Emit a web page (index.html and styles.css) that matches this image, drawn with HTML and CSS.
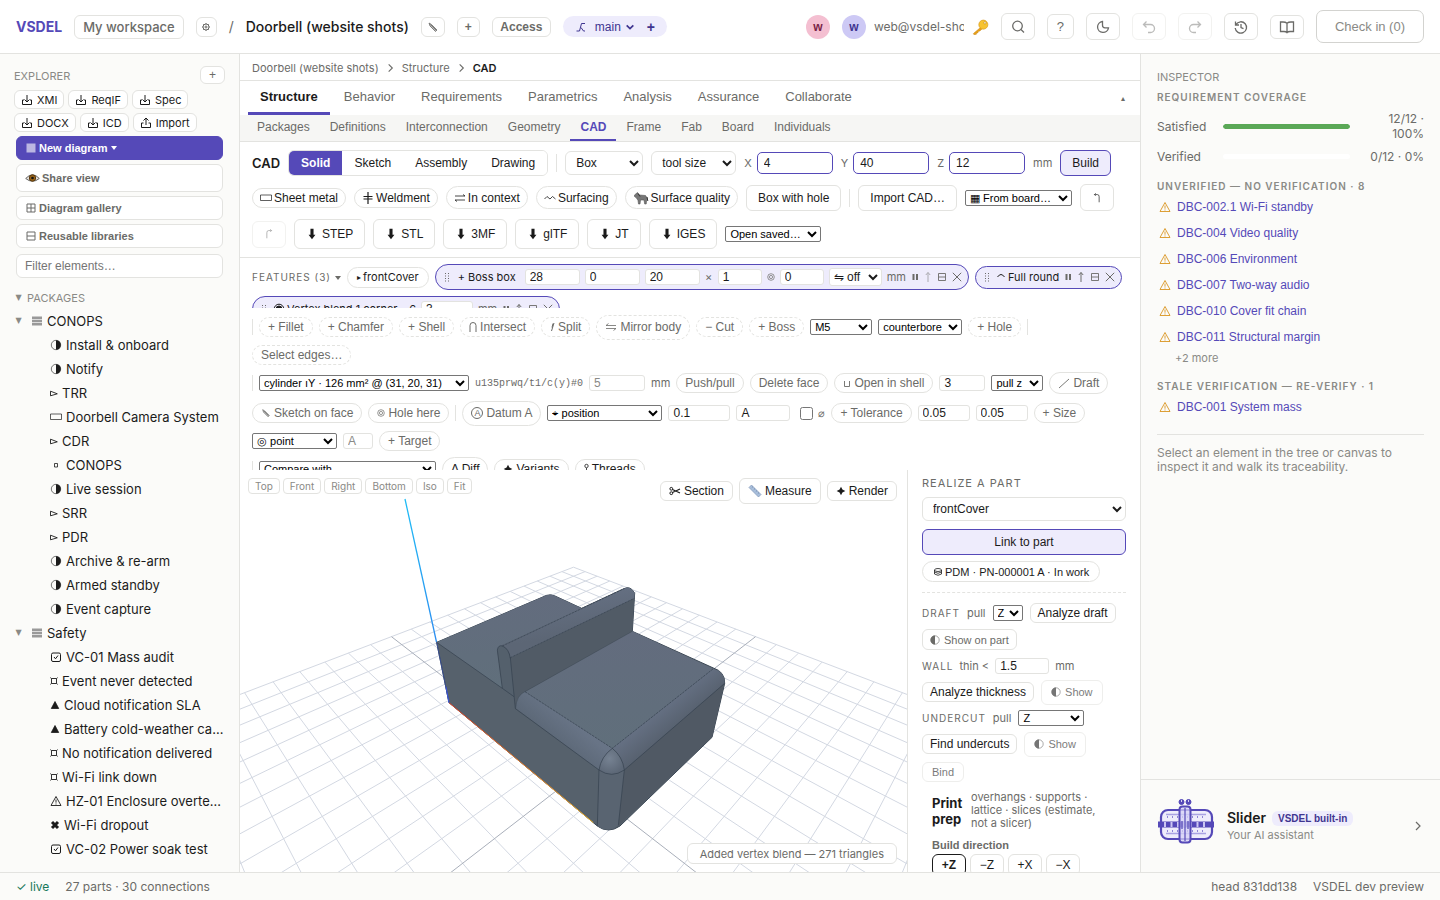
FILE: index.html
```html
<!DOCTYPE html>
<html lang="en">
<head>
<meta charset="utf-8">
<title>VSDEL – Doorbell (website shots)</title>
<meta name="viewport" content="width=device-width, initial-scale=1">
<link rel="stylesheet" href="styles.css">
</head>
<body>
<svg class="sprite" aria-hidden="true">
  <symbol id="download" viewBox="0 0 12 12"><path d="M6 1v7M3.500 5.500 6 8l2.500-2.500M3 6H1.500v4.500h9V6H9"/></symbol>
  <symbol id="upload" viewBox="0 0 12 12"><path d="M6 8V1M3.500 3.500 6 1l2.500 2.500M3.500 6h-2v4.500h9V6h-2"/></symbol>
  <symbol id="pencil" viewBox="0 0 12 12"><path d="M2 2l1 3 5.500 5.500 1.500-1.500L4.500 3.500zM3.500 3.500l5.500 5.500" stroke-width=".8" fill="#bbb"/></symbol>
  <symbol id="gear" viewBox="0 0 12 12"><circle cx="6" cy="6" r="3"/><circle cx="6" cy="6" r="1"/><path d="M6 2v1M6 9v1M2 6h1M9 6h1M3.200 3.200l.7.7M8.100 8.100l.7.7M8.800 3.200l-.7.7M3.900 8.100l-.7.7"/></symbol>
  <symbol id="half" viewBox="0 0 12 12"><circle cx="6" cy="6" r="4.700" stroke-width=".6"/><path d="M6 1.200a4.800 4.800 0 0 1 0 9.600z" fill="currentColor" stroke="none"/></symbol>
  <symbol id="halfleft" viewBox="0 0 10 12"><circle cx="5" cy="6" r="4.200" stroke-width=".6"/><path d="M5 1.500a4.500 4.500 0 0 0 0 9z" fill="currentColor" stroke="none"/></symbol>
  <symbol id="flag" viewBox="0 0 8 12"><path d="M.5 4.200l6.800 2.600-6.800 2z" stroke-width=".9"/></symbol>
  <symbol id="rect" viewBox="0 0 12 12"><path d="M.5 3h11v5.500H.5z" stroke-width=".7"/></symbol>
  <symbol id="dotbox" viewBox="0 0 12 12"><path d="M4.500 4.500h3v3.500h-3z" stroke-width=".8"/></symbol>
  <symbol id="pkg" viewBox="0 0 12 12"><path d="M1 1.500h10v9H1z" fill="#999" stroke="none"/><path d="M1 4.500h10M1 7.500h10" stroke="#eee" stroke-width=".8"/></symbol>
  <symbol id="solid" viewBox="0 0 12 12"><path d="M1.500 1.500h9v9h-9z" fill="currentColor" stroke="none"/></symbol>
  <symbol id="check" viewBox="0 0 12 12"><rect x="1.500" y="2" width="9" height="8.500" rx="1.500"/><path d="M4 6l1.500 1.800L8 4.500"/></symbol>
  <symbol id="square" viewBox="0 0 8 12"><path d="M1.500 3.500h5v5h-5zM.3 2.600l1.200.9M7.700 2.600l-1.200.9M.3 9.400l1.200-.9M7.700 9.400l-1.200-.9" stroke-width=".9"/></symbol>
  <symbol id="tri" viewBox="0 0 10 12"><path d="M5 2.500l3.700 7H1.300z" fill="currentColor" stroke="currentColor" stroke-width=".8"/></symbol>
  <symbol id="warn" viewBox="0 0 12 12"><path d="M6 1.500l5 9H1zM6 4.500v3.200M6 8.500v1" stroke-width=".9"/></symbol>
  <symbol id="cross" viewBox="0 0 10 12"><path d="M2 3l6 6M8 3L2 9" stroke-width="3"/></symbol>
  <symbol id="grid" viewBox="0 0 12 12"><path d="M2 2h8v8H2zM6 2v8M2 6h8"/></symbol>
  <symbol id="minusbox" viewBox="0 0 12 12"><path d="M2 2h8v8H2zM2 6h8"/></symbol>
  <symbol id="eye" viewBox="0 0 15 12"><path d="M.7 6.500Q7.500-1 14.300 6.500 7.500 12 .7 6.500z" fill="#e8e4e0" stroke="#666" stroke-width="1"/><circle cx="7.500" cy="6" r="3.200" fill="#9a6518" stroke="#5a3a10"/><circle cx="7.500" cy="6" r="1.300" fill="#111" stroke="none"/></symbol>
  <symbol id="branch" viewBox="0 0 12 12"><path d="M1.500 10h3l2-7.500h3.500M6 6.500L8.500 10H10"/></symbol>
  <symbol id="chev" viewBox="0 0 12 12"><path d="M2 4l4 4 4-4" stroke-width="2"/></symbol>
  <symbol id="next" viewBox="0 0 12 12"><path d="M4 2l4 4-4 4" stroke-width="1.200"/></symbol>
  <symbol id="key" viewBox="0 0 18 18"><path d="M9 9.500l-7.500 6.500.5 1 2.500-.2.300-1.500 1.500-.2.300-1.500 1.700-.4 2.200-2z" fill="#e9a21a" stroke="#c98512" stroke-width=".6"/><circle cx="12" cy="6.500" r="4.800" fill="#f7c331" stroke="#d7981a" stroke-width=".7"/><circle cx="13.700" cy="4.600" r="1.200" fill="#fff" stroke="#b98010" stroke-width=".6"/></symbol>
  <symbol id="search" viewBox="0 0 16 16"><circle cx="7.500" cy="7" r="4.800"/><path d="M11 10.500l3 3"/></symbol>
  <symbol id="moon" viewBox="0 0 16 16"><path d="M7.500 2.500a5.500 5.500 0 1 0 6 6.300H10a2.500 2.500 0 0 1-2.500-2.500z"/></symbol>
  <symbol id="undo" viewBox="0 0 16 16"><path d="M5.500 2.500l-3 3 3 3M2.500 5.500h7a4 4 0 0 1 0 8H7"/></symbol>
  <symbol id="redo" viewBox="0 0 16 16"><path d="M10.500 2.500l3 3-3 3M13.500 5.500h-7a4 4 0 0 0 0 8H9"/></symbol>
  <symbol id="history" viewBox="0 0 16 16"><path d="M3 5.500a5.700 5.700 0 1 1-.8 3.500M2.500 2.500v3.500H6M8 5v3.500l2.500 1.200"/></symbol>
  <symbol id="book" viewBox="0 0 16 16"><path d="M8 4.200Q6.500 3 4 3H1.500v9.500H5q2 0 3 1.200 1-1.200 3-1.200h3.500V3H12Q9.500 3 8 4.200zv9.500"/></symbol>
  <symbol id="weld" viewBox="0 0 12 12"><path d="M6 0v12M1.500 4.500h9M1.500 7h9" stroke-width="1.200"/></symbol>
  <symbol id="swap" viewBox="0 0 12 12"><path d="M1 4h10L9 2.500M11 8H1l2 1.500" stroke-width=".8"/></symbol>
  <symbol id="mirror" viewBox="0 0 12 12"><path d="M11 4.500H1l2.500-2M1 7.500h10l-2.500 2" stroke-width=".8"/></symbol>
  <symbol id="wave" viewBox="0 0 12 12"><path d="M.5 7L3 4.500 6 7l2.500-2.500L11.500 7" stroke-width=".8"/></symbol>
  <symbol id="horse" viewBox="0 0 16 14"><path d="M1.500 4l3-2.500 2 2.500 6 .5 2 3-.8 1-.5 4.500h-1.500L11 9H7.500L7 13H5.500L5 9.500 3.500 7 1.500 5.500z" fill="#777" stroke="#555" stroke-width=".6"/><path d="M5 2.500l2 3M14 6l.8 4" stroke="#333"/></symbol>
  <symbol id="arrowdown" viewBox="0 0 12 14"><path d="M4.200 1h3.600v7h2.200L6 13 2 8h2.200z" fill="currentColor" stroke="none"/></symbol>
  <symbol id="turnleft" viewBox="0 0 12 14"><path d="M8.500 12V5.500q0-2.500-2-2.500H3M4.500 1.500L3 3l1.500 1.500" stroke-width=".8"/></symbol>
  <symbol id="turnright" viewBox="0 0 12 14"><path d="M3.500 12V5.500q0-2.500 2-2.500H9M7.500 1.500L9 3 7.500 4.500" stroke-width=".8"/></symbol>
  <symbol id="grip" viewBox="0 0 8 12"><path d="M2 2.500h1M5 2.500h1M2 5h1M5 5h1M2 7.500h1M5 7.500h1M2 10h1M5 10h1"/></symbol>
  <symbol id="pause" viewBox="0 0 8 12"><path d="M2.500 3v6M6 3v6" stroke-width="2"/></symbol>
  <symbol id="up" viewBox="0 0 8 12"><path d="M4 11V1.500M1.800 4L4 1.500 6.200 4"/></symbol>
  <symbol id="x" viewBox="0 0 10 12"><path d="M.8 1.800l8.400 8.400M9.200 1.800L.8 10.200"/></symbol>
  <symbol id="bar2" viewBox="0 0 10 12"><path d="M1.500 2.500h7v7h-7zM1.500 6h7" stroke-width=".9"/></symbol>
  <symbol id="ring" viewBox="0 0 8 12"><circle cx="4" cy="6" r="3.300" stroke-width=".7"/><circle cx="4" cy="6" r="1.600" stroke-width=".7"/></symbol>
  <symbol id="arc" viewBox="0 0 10 12"><path d="M1.500 6q3.500-5 7 0"/></symbol>
  <symbol id="target" viewBox="0 0 12 12"><circle cx="6" cy="6" r="4.800"/><circle cx="6" cy="6" r="3" fill="currentColor"/></symbol>
  <symbol id="cap" viewBox="0 0 8 12"><path d="M1 11V4.500a3 3 0 0 1 6 0V11"/></symbol>
  <symbol id="slash" viewBox="0 0 5 12"><path d="M4 2L1.500 10M3 2.500l-1 4"/></symbol>
  <symbol id="cup" viewBox="0 0 8 12"><path d="M1.500 4v5.500h5V4" stroke-width=".9"/></symbol>
  <symbol id="diag" viewBox="0 0 12 12"><path d="M1 11L11 2" stroke-width=".9"/></symbol>
  <symbol id="star" viewBox="0 0 12 12"><path d="M6 .8L7.700 4.300 11.200 6 7.700 7.700 6 11.200 4.300 7.700.8 6l3.500-1.700z" fill="currentColor" stroke="none"/></symbol>
  <symbol id="scissors" viewBox="0 0 12 12"><circle cx="2.300" cy="3.800" r="1.400"/><circle cx="2.300" cy="8.200" r="1.400"/><path d="M3.500 4.500L11 8M3.500 7.500L11 4" stroke-width="1.200"/></symbol>
  <symbol id="ruler" viewBox="0 0 14 14"><path d="M1 3.500L3.500 1 13 10.500 10.500 13z" fill="#a9bfdc" stroke="#8097b8" stroke-width=".7"/><path d="M5 2.500L3.800 3.700M7 4.500L5.800 5.700M9 6.500L7.800 7.700M11 8.500L9.800 9.700" stroke="#5c7396" stroke-width=".6"/></symbol>
  <symbol id="disc" viewBox="0 0 10 12"><ellipse cx="5" cy="4" rx="3.500" ry="1.500" stroke-width=".8"/><path d="M1.500 4v4q3.500 2.600 7 0V4M1.500 6q3.500 2.600 7 0" stroke-width=".8"/></symbol>
  <symbol id="thread" viewBox="0 0 5 12"><circle cx="2.500" cy="3" r="1.700" stroke-width=".8"/><path d="M2.500 5v6" stroke-width=".8"/></symbol>
</svg>
<div class="app">
  <header class="topbar">
    <span class="brand">VSDEL</span>
    <button class="hbtn workspace">My workspace</button>
    <button class="hbtn small gear" aria-label="Settings"><svg class="i"><use href="#gear"/></svg></button>
    <span class="sep">/</span>
    <h1 class="project">Doorbell (website shots)</h1>
    <button class="hbtn small" aria-label="Rename"><svg class="i"><use href="#pencil"/></svg></button>
    <button class="hbtn small strong">+</button>
    <button class="hbtn small strong access">Access</button>
    <div class="branch"><svg class="i"><use href="#branch"/></svg><button class="plain">main <svg class="i i10"><use href="#chev"/></svg></button><button class="plain plus">+</button></div>
    <div class="topright">
      <span class="avatar pink">w</span>
      <div class="user"><span class="avatar violet">w</span><span class="email">web@vsdel-shots</span></div>
      <svg class="i keyicon"><use href="#key"/></svg>
      <button class="hbtn tool" aria-label="Search"><svg class="i i16"><use href="#search"/></svg></button>
      <button class="hbtn help">?</button>
      <button class="hbtn tool" aria-label="Theme"><svg class="i i16"><use href="#moon"/></svg></button>
      <button class="hbtn tool" disabled aria-label="Undo"><svg class="i i16"><use href="#undo"/></svg></button>
      <button class="hbtn tool" disabled aria-label="Redo"><svg class="i i16"><use href="#redo"/></svg></button>
      <button class="hbtn tool" aria-label="History"><svg class="i i16"><use href="#history"/></svg></button>
      <button class="hbtn tool docs" aria-label="Docs"><svg class="i i16"><use href="#book"/></svg></button>
      <button class="hbtn checkin">Check in (0)</button>
    </div>
  </header>
  <div class="body">
    <aside class="explorer">
      <div class="exhead"><span class="label">EXPLORER</span><button class="hbtn add">+</button></div>
      <div class="chips">
        <button class="exchip"><svg class="i"><use href="#download"/></svg>XMI</button><button class="exchip"><svg class="i"><use href="#download"/></svg>ReqIF</button><button class="exchip"><svg class="i"><use href="#download"/></svg>Spec</button>
      </div>
      <div class="chips">
        <button class="exchip"><svg class="i"><use href="#download"/></svg>DOCX</button><button class="exchip"><svg class="i"><use href="#download"/></svg>ICD</button><button class="exchip"><svg class="i"><use href="#upload"/></svg>Import</button>
      </div>
      <div class="exbtns">
        <button class="wide primary"><svg class="i faded"><use href="#solid"/></svg>New diagram <span class="caret"></span></button>
        <button class="wide share"><svg class="i eyeicon"><use href="#eye"/></svg>Share view</button>
        <button class="wide"><svg class="i"><use href="#grid"/></svg>Diagram gallery</button>
        <button class="wide"><svg class="i"><use href="#minusbox"/></svg>Reusable libraries</button>
        <input class="filter" type="text" placeholder="Filter elements…" aria-label="Filter elements">
      </div>
      <div class="packages"><span class="twist">▼</span>PACKAGES</div>
      <ul class="tree">
        <li class="top"><span class="twist">▼</span><svg class="i"><use href="#pkg"/></svg>CONOPS</li>
        <li><svg class="i"><use href="#half"/></svg>Install &amp; onboard</li>
        <li><svg class="i"><use href="#half"/></svg>Notify</li>
        <li><svg class="i n8"><use href="#flag"/></svg>TRR</li>
        <li><svg class="i"><use href="#rect"/></svg>Doorbell Camera System</li>
        <li><svg class="i n8"><use href="#flag"/></svg>CDR</li>
        <li><svg class="i"><use href="#dotbox"/></svg>CONOPS</li>
        <li><svg class="i"><use href="#half"/></svg>Live session</li>
        <li><svg class="i n8"><use href="#flag"/></svg>SRR</li>
        <li><svg class="i n8"><use href="#flag"/></svg>PDR</li>
        <li><svg class="i"><use href="#half"/></svg>Archive &amp; re-arm</li>
        <li><svg class="i"><use href="#half"/></svg>Armed standby</li>
        <li><svg class="i"><use href="#half"/></svg>Event capture</li>
        <li class="top"><span class="twist">▼</span><svg class="i"><use href="#pkg"/></svg>Safety</li>
        <li><svg class="i"><use href="#check"/></svg>VC-01 Mass audit</li>
        <li><svg class="i n8"><use href="#square"/></svg>Event never detected</li>
        <li><svg class="i n10"><use href="#tri"/></svg>Cloud notification SLA</li>
        <li><svg class="i n10"><use href="#tri"/></svg>Battery cold-weather ca…</li>
        <li><svg class="i n8"><use href="#square"/></svg>No notification delivered</li>
        <li><svg class="i n8"><use href="#square"/></svg>Wi-Fi link down</li>
        <li><svg class="i"><use href="#warn"/></svg>HZ-01 Enclosure overte…</li>
        <li><svg class="i n10"><use href="#cross"/></svg>Wi-Fi dropout</li>
        <li><svg class="i"><use href="#check"/></svg>VC-02 Power soak test</li>
      </ul>
    </aside>

    <main class="center">
      <nav class="crumbs"><span>Doorbell (website shots)</span><svg class="i"><use href="#next"/></svg><span>Structure</span><svg class="i"><use href="#next"/></svg><b>CAD</b></nav>
      <nav class="tabs">
        <button class="tab on">Structure</button><button class="tab">Behavior</button><button class="tab">Requirements</button><button class="tab">Parametrics</button><button class="tab">Analysis</button><button class="tab">Assurance</button><button class="tab">Collaborate</button>
        <button class="plain collapse">▴</button>
      </nav>
      <nav class="subtabs">
        <button class="sub">Packages</button><button class="sub">Definitions</button><button class="sub">Interconnection</button><button class="sub">Geometry</button><button class="sub on">CAD</button><button class="sub">Frame</button><button class="sub">Fab</button><button class="sub">Board</button><button class="sub">Individuals</button>
      </nav>
      <section class="toolbar">
        <div class="row">
          <b class="cad">CAD</b>
          <div class="seg"><button class="on">Solid</button><button>Sketch</button><button>Assembly</button><button>Drawing</button></div>
          <span class="vr"></span>
          <select class="sel box" aria-label="Primitive"><option>Box</option></select>
          <select class="sel size" aria-label="Size mode"><option>tool size</option></select>
          <label class="dim">X<input type="text" value="4"></label>
          <label class="dim">Y<input type="text" value="40"></label>
          <label class="dim">Z<input type="text" value="12"></label>
          <span class="unit">mm</span>
          <button class="btn accent">Build</button>
        </div>
        <div class="row">
          <button class="chip"><svg class="i"><use href="#rect"/></svg>Sheet metal</button>
          <button class="chip"><svg class="i"><use href="#weld"/></svg>Weldment</button>
          <button class="chip tall"><svg class="i"><use href="#swap"/></svg>In context</button>
          <button class="chip tall"><svg class="i"><use href="#wave"/></svg>Surfacing</button>
          <button class="chip tall"><svg class="i i16w"><use href="#horse"/></svg>Surface quality</button>
          <button class="btn">Box with hole</button>
          <span class="vr"></span>
          <button class="btn">Import CAD…</button>
          <select class="nat w107" aria-label="From board"><option>▦ From board…</option></select>
          <button class="btn turn" aria-label="Undo"><svg class="i"><use href="#turnleft"/></svg></button>
        </div>
        <div class="row">
          <button class="btn turn" disabled aria-label="Redo"><svg class="i"><use href="#turnright"/></svg></button>
          <button class="btn exp"><svg class="i"><use href="#arrowdown"/></svg>STEP</button>
          <button class="btn exp"><svg class="i"><use href="#arrowdown"/></svg>STL</button>
          <button class="btn exp"><svg class="i"><use href="#arrowdown"/></svg>3MF</button>
          <button class="btn exp"><svg class="i"><use href="#arrowdown"/></svg>glTF</button>
          <button class="btn exp"><svg class="i"><use href="#arrowdown"/></svg>JT</button>
          <button class="btn exp"><svg class="i"><use href="#arrowdown"/></svg>IGES</button>
          <select class="nat w96" aria-label="Open saved"><option>Open saved…</option></select>
        </div>
      </section>
      <section class="features">
        <div class="row">
          <span class="flabel">FEATURES (3) <span class="caret"></span></span>
          <button class="chip part"><span class="tiny">▸</span>frontCover</button>
          <div class="pill big"><svg class="i n8"><use href="#grip"/></svg><span class="pname wide3">+ Boss box</span>
            <input class="w55" value="28" aria-label="x"><input class="w55" value="0" aria-label="y"><input class="w55" value="20" aria-label="z"><span class="mut mid">×</span><input class="w44" value="1" aria-label="count"><svg class="i n8"><use href="#ring"/></svg><input class="w44" value="0" aria-label="angle">
            <select class="mini" aria-label="Mirror"><option>⇋ off</option></select><span class="mut">mm</span>
            <svg class="i n8"><use href="#pause"/></svg><svg class="i n8 dim50"><use href="#up"/></svg><svg class="i n10"><use href="#bar2"/></svg><svg class="i n10"><use href="#x"/></svg></div>
          <div class="pill"><svg class="i n8"><use href="#grip"/></svg><span class="pname"><svg class="i n10"><use href="#arc"/></svg>Full round</span><svg class="i n8"><use href="#pause"/></svg><svg class="i n8"><use href="#up"/></svg><svg class="i n10"><use href="#bar2"/></svg><svg class="i n10"><use href="#x"/></svg></div>
        </div>
        <div class="row">
          <div class="pill big"><svg class="i n8"><use href="#grip"/></svg><span class="pname"><svg class="i"><use href="#target"/></svg> Vertex blend 1 corner ⌄6</span><input class="w52" value="3" aria-label="radius"><span class="mut">mm</span><svg class="i n8"><use href="#pause"/></svg><svg class="i n8"><use href="#up"/></svg><svg class="i n10"><use href="#bar2"/></svg><svg class="i n10"><use href="#x"/></svg></div>
        </div>
      </section>
      <section class="ops">
        <div class="row h24">
          <span class="vr"></span>
          <button class="op dash">+ Fillet</button><button class="op dash">+ Chamfer</button><button class="op dash">+ Shell</button><button class="op dash"><svg class="i n8"><use href="#cap"/></svg>Intersect</button><button class="op dash"><svg class="i n5"><use href="#slash"/></svg>Split</button><button class="op dash mir"><svg class="i"><use href="#mirror"/></svg>Mirror body</button><button class="op dash">− Cut</button><button class="op dash">+ Boss</button>
          <select class="nat w62" aria-label="Thread"><option>M5</option></select><select class="nat w84" aria-label="Hole type"><option>counterbore</option></select>
          <button class="op dash">+ Hole</button><span class="vr"></span>
        </div>
        <div class="row"><button class="op dash">Select edges…</button></div>
        <div class="row h24">
          <span class="vr"></span>
          <select class="nat w210" aria-label="Face"><option>cylinder ıY · 126 mm² @ (31, 20, 31)</option></select>
          <code class="mono">u135prwq/t1/c(y)#0</code>
          <input class="field w56 off" value="5" aria-label="Distance"><span class="mut">mm</span>
          <button class="op">Push/pull</button><button class="op">Delete face</button><button class="op"><svg class="i n8"><use href="#cup"/></svg>Open in shell</button>
          <input class="field w46" value="3" aria-label="Angle"><select class="nat w52" aria-label="Pull"><option>pull z</option></select>
          <button class="op mid22"><svg class="i"><use href="#diag"/></svg>Draft</button>
        </div>
        <div class="row h24">
          <button class="op"><svg class="i n10"><use href="#pencil"/></svg>Sketch on face</button><button class="op"><svg class="i n8"><use href="#ring"/></svg>Hole here</button><span class="vr"></span>
          <button class="op mir"><span class="circ">A</span>Datum A</button>
          <select class="nat w115" aria-label="Tolerance type"><option>⌖ position</option></select>
          <input class="field w62" value="0.1" aria-label="Tolerance"><input class="field w54" value="A" aria-label="Datum">
          <label class="diam"><input type="checkbox">⌀</label>
          <button class="op">+ Tolerance</button><input class="field w52" value="0.05" aria-label="Upper"><input class="field w52" value="0.05" aria-label="Lower"><button class="op">+ Size</button>
        </div>
        <div class="row"><select class="nat w85" aria-label="Target type"><option>◎ point</option></select><input class="field w30 off" value="A" aria-label="Target datum"><button class="op">+ Target</button></div>
        <div class="row h24">
          <span class="vr"></span><select class="nat w177" aria-label="Compare"><option>Compare with…</option></select>
          <button class="op dark mir">Δ Diff</button><button class="op dark"><svg class="i n10"><use href="#star"/></svg>Variants</button><button class="op dark"><svg class="i n5"><use href="#thread"/></svg>Threads</button>
        </div>
      </section>
      <section class="work">
        <div class="viewport">
          <svg class="scene" viewBox="240 470 667 402" preserveAspectRatio="xMidYMid slice" role="img" aria-label="Solid model">
            <defs>
              <linearGradient id="gTop" x1="0" y1="0" x2="0" y2="1"><stop offset="0" stop-color="#636c7e"/><stop offset="1" stop-color="#606f7b"/></linearGradient>
              <linearGradient id="gFin" x1="0" y1="0" x2=".35" y2="1"><stop offset=".2" stop-color="#667184"/><stop offset=".75" stop-color="#5c6675"/></linearGradient>
              <linearGradient id="gEdge" gradientUnits="userSpaceOnUse" x1="510" y1="540" x2="460" y2="600"><stop offset="0" stop-color="#687486"/><stop offset="1" stop-color="#5c6877"/></linearGradient>
              <linearGradient id="gRight" gradientUnits="userSpaceOnUse" x1="780" y1="500" x2="830" y2="560"><stop offset="0" stop-color="#667184"/><stop offset="1" stop-color="#57616f"/></linearGradient>
              <radialGradient id="gBall" cx=".42" cy=".4" r=".6"><stop offset="0" stop-color="#768292"/><stop offset="1" stop-color="#5c6776"/></radialGradient>
              <linearGradient id="gAxis" x1="0" y1="0" x2="0" y2="1"><stop offset="0" stop-color="#1ebcf5"/><stop offset="1" stop-color="#2b8cf0"/></linearGradient>
              <linearGradient id="gX" x1="0" y1="0" x2="1" y2="1"><stop offset="0" stop-color="#d9442c"/><stop offset="1" stop-color="#eeb32a"/></linearGradient>
            </defs>
            <path id="minor" class="gridline"/><path id="major" class="gridmajor"/>
            <path d="M405 499L436.500 642" stroke="url(#gAxis)" stroke-width="1.300" fill="none"/>
            <g transform="translate(400 540) scale(.33333)" stroke-linejoin="round">
              <path d="M110 307L440 166Q452 162 465 168L545 205 672 146Q692 136 704 160L697 274 940 384Q975 395 974 430L936 592 660 858Q625 882 592 858L147 488z" fill="#56616c" stroke="#3a4653" stroke-width="3"/>
              <path d="M110 307L440 166Q452 162 465 168L545 205 305 316 292 335 307 445z" fill="url(#gTop)"/>
              <path d="M673 690L974 430 936 592 655 858z" fill="#505964"/>
              <path d="M375 455L697 274 940 386 637 625z" fill="url(#gTop)"/>
              <path d="M331 353L703 172 697 274 375 455Q350 468 346 500z" fill="#515b66"/>
              <path d="M305 316L672 146Q692 136 704 160L703 175 331 353Q325 322 305 316z" fill="url(#gFin)"/>
              <path d="M375 455L637 625Q605 650 597 690L347 505Q350 465 375 455z" fill="url(#gEdge)"/>
              <path d="M940 386Q975 395 974 430L673 690Q668 650 637 625z" fill="url(#gRight)"/>
              <path d="M597 690Q635 716 673 690L655 856Q625 882 592 858z" fill="#596471"/>
              <path d="M637 625Q668 650 673 690 635 716 597 690 603 650 637 625z" fill="url(#gBall)"/>
              <path d="M292 330Q295 314 307 318 327 326 331 355L346 500 342 470 307 445z" fill="#54606c"/>
              <g fill="none" stroke="#33404d" stroke-width="2"><path d="M110 307L307 445 342 470M345 505L597 690M673 690L974 430M331 353L346 505M307 445L292 330Q295 314 307 318 327 326 331 355M597 690L592 858M673 690L655 856M637 625Q668 650 673 690 635 716 597 690 603 650 637 625"/><path d="M375 455L637 625 940 386M331 353L703 175M307 318L672 146" stroke-dasharray="7 3"/><path d="M347 505Q350 465 375 455L697 274" stroke-width="1"/></g>
              <path d="M110 307L147 488" stroke="#394e91" stroke-width="3"/><path d="M147 488L580 848" stroke="url(#gX)" stroke-width="3"/><path d="M138 440L147 488" stroke="#3b54dd" stroke-width="3"/>
            </g>
          </svg>
          <div class="views"><button>Top</button><button>Front</button><button>Right</button><button>Bottom</button><button>Iso</button><button>Fit</button></div>
          <div class="vtools"><button class="vt"><svg class="i"><use href="#scissors"/></svg>Section</button><button class="vt meas"><svg class="i i14"><use href="#ruler"/></svg>Measure</button><button class="vt"><svg class="i n10"><use href="#star"/></svg>Render</button></div>
          <div class="toast" role="status">Added vertex blend — 271 triangles</div>
        </div>
        <aside class="props">
          <h2 class="label">REALIZE A PART</h2>
          <select class="sel full" aria-label="Part"><option>frontCover</option></select>
          <button class="btn accent link">Link to part</button>
          <button class="chip pdm"><svg class="i n10"><use href="#disc"/></svg>PDM · PN-000001 A · In work</button>
          <hr>
          <div class="row"><span class="label">DRAFT</span><label class="mut" for="pull1">pull</label><select id="pull1" class="nat w30"><option>Z</option></select><button class="sbtn">Analyze draft</button></div>
          <div class="row"><button class="sbtn grey"><svg class="i n10"><use href="#halfleft"/></svg>Show on part</button></div>
          <div class="row tight"><span class="label">WALL</span><label class="mut" for="thin">thin &lt;</label><input id="thin" class="field w54" value="1.5"><span class="mut">mm</span></div>
          <div class="row h24"><button class="sbtn">Analyze thickness</button><button class="sbtn ghost"><svg class="i n10"><use href="#halfleft"/></svg>Show</button></div>
          <div class="row"><span class="label">UNDERCUT</span><label class="mut" for="pull2">pull</label><select id="pull2" class="nat w66"><option>Z</option></select></div>
          <div class="row h24"><button class="sbtn">Find undercuts</button><button class="sbtn ghost"><svg class="i n10"><use href="#halfleft"/></svg>Show</button></div>
          <div class="row bindrow"><button class="sbtn ghost bind">Bind</button></div>
          <div class="print"><b>Print prep</b><p>overhangs · supports · lattice · slices (estimate, not a slicer)</p></div>
          <div class="build"><b>Build direction</b><div class="dirs"><button class="on">+Z</button><button>−Z</button><button>+X</button><button>−X</button></div></div>
        </aside>
      </section>
    </main>

    <aside class="inspector">
      <div class="inbody">
        <div class="label">INSPECTOR</div>
        <h3>REQUIREMENT COVERAGE</h3>
        <div class="cov"><span>Satisfied</span><i class="bar"><i style="width:100%"></i></i><span class="num">12/12 · 100%</span></div>
        <div class="cov second"><span>Verified</span><i class="bar"><i style="width:0%"></i></i><span class="num">0/12 · 0%</span></div>
        <h3>UNVERIFIED — NO VERIFICATION · 8</h3>
        <ul class="reqs">
          <li><svg class="i"><use href="#warn"/></svg><a href="#">DBC-002.1 Wi-Fi standby</a></li>
          <li><svg class="i"><use href="#warn"/></svg><a href="#">DBC-004 Video quality</a></li>
          <li><svg class="i"><use href="#warn"/></svg><a href="#">DBC-006 Environment</a></li>
          <li><svg class="i"><use href="#warn"/></svg><a href="#">DBC-007 Two-way audio</a></li>
          <li><svg class="i"><use href="#warn"/></svg><a href="#">DBC-010 Cover fit chain</a></li>
          <li><svg class="i"><use href="#warn"/></svg><a href="#">DBC-011 Structural margin</a></li>
        </ul>
        <div class="more">+2 more</div>
        <h3 class="stale">STALE VERIFICATION — RE-VERIFY · 1</h3>
        <ul class="reqs"><li><svg class="i"><use href="#warn"/></svg><a href="#">DBC-001 System mass</a></li></ul>
        <p class="hint">Select an element in the tree or canvas to inspect it and walk its traceability.</p>
      </div>
      <button class="assistant">
        <svg class="bot" viewBox="0 0 58 48" fill="none" stroke="#5549b8">
          <rect x="4" y="14" width="51" height="29" rx="7" fill="#eeecfb" stroke-width="2.200"/>
          <path d="M9 18.500h40M9 37.500h40" stroke="#a9a2e2" stroke-width="1.500"/><path d="M10 21h38M10 35h38" stroke-width="2" stroke-dasharray="1 4" stroke="#8d84d6"/>
          <path d="M1 28.500h56" stroke-width="6"/><path d="M7 28.500h44" stroke="#cbc6f2" stroke-width="5" stroke-dasharray="2 4.500"/>
          <rect x="22.500" y="10.500" width="11" height="36" rx="3" fill="#d5d1f6" fill-opacity=".75" stroke-width="2"/><path d="M28 12v33M25 25v8M31 25v8" stroke-width="1.200"/>
          <circle cx="24.500" cy="6" r="2.500" fill="#5549b8"/><circle cx="31.500" cy="6" r="2.500" fill="#5549b8"/><path d="M24 5h1M31 5h1" stroke="#fff" stroke-width="1.500"/>
        </svg>
        <span class="who"><span class="name">Slider <em>VSDEL built-in</em></span><small>Your AI assistant</small></span>
        <svg class="i"><use href="#next"/></svg>
      </button>
    </aside>
  </div>
  <footer class="status"><span class="live">✓ live</span><span>27 parts · 30 connections</span><span class="head">head 831dd138</span><span>VSDEL dev preview</span></footer>
</div>
<script src="grid.js"></script>
</body>
</html>
```
FILE: styles.css
```css
*{box-sizing:border-box}
:root{--line:#e3e3e0;--accent:#5549b8;--tint:#eeecfc;--ink:#1b1b1b;--mute:#6b6b68;--soft:#8a8a86;--side:#fbfbf9;--arial:"Liberation Sans",Arial,sans-serif}
html,body{height:100%}
body{margin:0;font:12px/16px Inter,sans-serif;color:var(--ink);background:#fff}
button,input,select{font-family:var(--arial);font-size:12px;color:var(--ink);margin:0}
button{background:#fff;border:1px solid var(--line);border-radius:6px;padding:0 10px;display:inline-flex;align-items:center;justify-content:center;gap:4px;white-space:nowrap;flex:none}
button:disabled{opacity:.45}
ul{list-style:none;margin:0;padding:0}
h1,h2,h3,p{margin:0;font-weight:400}
.sprite{position:absolute;width:0;height:0}
.i{width:12px;height:12px;fill:none;stroke:currentColor;stroke-width:1;flex:none}
.i.n5{width:5px}.i.n8{width:8px}.i.n10,.i.i10{width:10px}.i.i14{width:14px;height:14px}.i.i16{width:16px;height:16px;stroke-width:1.300}.i.i16w{width:16px;height:14px}
.app{display:flex;flex-direction:column;height:100vh;overflow:hidden}
.plain{border:0;background:none;padding:0}
.label{font-size:11px;color:var(--soft)}

.topbar{display:flex;align-items:center;gap:12px;height:54px;flex:none;padding:0 16px;border-bottom:1px solid var(--line);white-space:nowrap}
.brand{font-size:14px;font-weight:700;color:var(--accent)}
.hbtn{color:var(--mute)}
.workspace{font:500 13px Inter,sans-serif;height:24px;padding:0 8px}
.small{height:20px;padding:0;width:24px}
.small.gear{width:21px}
.small.strong{font-weight:700;width:23px}
.small.access{width:59px}
.sep{font-size:14px;color:var(--mute)}
.project{font-size:14px;font-weight:500}
.branch{display:flex;align-items:center;gap:8px;height:21px;padding:0 12px;border-radius:11px;background:var(--tint);color:#3f3590}
.branch .plain{color:#3f3590}.branch .plus{font-weight:700;font-size:14px;margin-left:4px}
.topright{display:flex;align-items:center;gap:12px;margin-left:auto}
.avatar{width:24px;height:24px;border-radius:50%;display:grid;place-items:center;font:700 12px/22px var(--arial)}
.pink{background:#f4bfd1;color:#7a2446}.violet{background:#cdc9f5;color:#3f3590}
.user{display:flex;align-items:center;gap:8px}
.email{width:90px;overflow:hidden;color:var(--mute);font-size:12px}
.user + .keyicon{margin-left:-4px;width:17px;height:18px}
.tool{width:34px;height:27px;padding:0}.help{width:27px;height:25px;padding:0;font-size:13px}.docs{height:24px}
.checkin{height:33px;padding:0 18px;font-size:13px;color:var(--soft);border-color:#d3d3d0;border-radius:7px}

.body{display:flex;flex:1;min-height:0}
.explorer{width:240px;flex:none;background:var(--side);border-right:1px solid var(--line);padding:12px 14px 0;overflow:hidden}
.exhead{display:flex;justify-content:space-between;height:18px;align-items:center;margin-bottom:6px}
.exhead .label{margin-top:2px}
.add{width:25px;height:18px;padding:0}
.chips{display:flex;gap:4px;margin-bottom:4px}
.exchip{height:19px;padding:0 6px;font-family:Inter,sans-serif;font-size:11px}
.exbtns{display:flex;flex-direction:column;gap:4px;padding:0 2px}
.wide{height:24px;justify-content:flex-start;padding:0 8px;gap:2px;font-weight:700;font-size:11px;color:var(--mute);border-radius:6px}
.wide.share{height:28px}
.i.eyeicon{width:15px}
.wide.primary{background:var(--accent);border-color:var(--accent);color:#fff}
.wide .caret{margin-left:2px}
.faded{opacity:.6}
.caret{display:inline-block;border:3px solid transparent;border-top:4px solid currentColor;border-bottom:0;vertical-align:middle}
.filter{height:24px;margin-top:2px;border:1px solid var(--line);border-radius:6px;padding:0 8px;background:#fff}
.packages{font-size:11px;color:var(--soft);margin:12px 0 3px;display:flex;gap:4px;height:16px}
.twist{font-size:8px;width:9px;color:var(--soft);text-align:center;font-family:"DejaVu Sans",sans-serif}
.tree{font-size:13px}
.tree li{height:24px;display:flex;align-items:center;gap:4px;padding-left:36px;white-space:nowrap}
.tree li.top{padding-left:0}.tree .top .i{margin-left:4px}

.center{flex:1;min-width:0;display:flex;flex-direction:column;background:#fff}
.crumbs{display:flex;align-items:center;gap:6px;height:27px;padding:2px 12px 0;font-size:11px;color:var(--mute);border-bottom:1px solid var(--line)}
.crumbs b{color:var(--ink);font-weight:600}.crumbs .i{width:11px}
.tabs{display:flex;padding:0 8px;height:34px;flex:none}
.tab{border:0;border-radius:0;background:none;padding:0 12px;font-size:13px;color:var(--mute);border-bottom:3px solid transparent;margin-right:2px}
.tab.on{font-weight:700;color:var(--ink);border-color:var(--accent)}
.collapse{margin-left:auto;font-size:8px;color:var(--mute);padding:0 7px}
.subtabs{display:flex;height:27px;flex:none;padding:0 7px;background:#f6f6f4;border-bottom:1px solid var(--line)}
.sub{border:0;border-radius:0;background:none;padding:0 10px;color:var(--mute);border-bottom:2px solid transparent}
.sub.on{color:var(--accent);font-weight:700;border-color:var(--accent)}
.toolbar{display:flex;flex-direction:column;gap:8px;padding:8px 12px;border-bottom:1px solid var(--line);flex:none}
.row{display:flex;align-items:center;gap:8px;white-space:nowrap}
.cad{font-size:13px;font-weight:600}
.seg{display:flex;border:1px solid var(--line);border-radius:6px;overflow:hidden;height:26px}
.seg button{border:0;border-radius:0;padding:0 12px}
.seg .on{background:var(--accent);color:#fff;font-weight:700}
.vr{width:1px;height:18px;background:var(--line);flex:none}
.sel{height:24px;border:1px solid var(--line);border-radius:6px;background:#fff;padding:0 6px}
.sel.box{width:78px}.sel.size{width:85px}.sel.full{width:100%}
.dim{display:flex;align-items:center;gap:5px;font-size:11px;color:var(--mute)}
.dim input{width:76px;height:22px;border:1px solid var(--accent);border-radius:5px;padding:0 6px}
.unit,.mut{color:var(--mute);font-size:11px}
.btn{height:26px;padding:0 11px}
.btn.accent{background:var(--tint);border-color:var(--accent)}
.btn.turn{width:34px;height:27px;padding:0}
.btn.exp{height:30px;padding:0 11px;gap:4px}
.chip{height:20px;border-radius:12px;padding:0 7px;gap:2px}
.chip.tall{height:23px}
.nat{height:16px;border:1px solid #767676;border-radius:2px;background:#fff;padding:0;flex:none;color:#000;font-size:11px}
.w30{width:30px}.w44{width:44px}.w46{width:46px}.w52{width:52px}.w54{width:54px}.w55{width:55px}.w56{width:56px}.w62{width:62px}.w66{width:66px}.w84{width:84px}.w85{width:85px}.w96{width:96px}.w107{width:107px}.w115{width:115px}.w177{width:177px}.w210{width:210px}
.features{height:50px;flex:none;overflow:hidden;padding:6px 12px 0;display:flex;flex-direction:column;gap:6px}
.features .row{gap:6px;flex:none}
.flabel{font-size:10px;color:var(--mute);width:89px}
.part{font-family:Inter,sans-serif;font-size:11px;height:21px;padding:0 9px}
.tiny{font-size:8px}
.pill{display:flex;align-items:center;gap:5px;height:23px;padding:0 6px 0 7px;background:var(--tint);border:1px solid var(--accent);border-radius:13px;color:var(--mute);flex:none}
.pill.big{height:26px}
.pill .pname{color:var(--ink);font-size:11px;display:flex;align-items:center;gap:2px}
.pill .wide3{padding:0 4px 0 2px}
.pill input,.field{height:16px;border:1px solid var(--line);border-radius:3px;padding:0 4px;background:#fff;flex:none}
.mid{width:8px;text-align:center}
.mini{width:53px;height:18px;border:1px solid var(--line);border-radius:3px;background:#fff}
.dim50{opacity:.5}
.ops{height:162px;flex:none;overflow:hidden;padding:7px 12px 0;display:flex;flex-direction:column;gap:6px}
.ops .row{gap:6px;flex:none}
.h24{height:24px}
.ops .vr{height:16px}
.op{height:20px;border-radius:13px;padding:0 8px;color:var(--mute);font-size:12px;gap:3px}
.op.dash{border-style:dashed}.op.mir{height:25px}.op.mid22{height:22px}.op.dark{color:var(--ink)}
.mono{font:10px "Liberation Mono",monospace;color:var(--mute)}
.off{color:var(--soft)}
.circ{width:12px;height:12px;border:1px solid currentColor;border-radius:50%;font-size:9px;line-height:10px}
.diam{display:flex;align-items:center;gap:5px;color:var(--mute);font-size:11px;margin:0 0 0 4px}
.diam input{width:13px;height:13px;margin:0}

.work{display:flex;flex:1;min-height:0}
.viewport{flex:1;position:relative;min-width:0;overflow:hidden;background:#fff}
.scene{display:block;width:100%;height:100%}
.gridline{fill:none;stroke:#d3d8e2;stroke-width:1}.gridmajor{fill:none;stroke:#a9afba;stroke-width:1}
.views{position:absolute;left:8px;top:8px;display:flex;gap:3px}
.views button{height:16px;padding:0 6px;font-family:Inter,sans-serif;font-size:10px;color:var(--soft);border-radius:4px}
.vtools{position:absolute;right:10px;top:8px;display:flex;align-items:center;gap:6px}
.vt{height:20px;padding:0 8px;gap:3px}
.vt.meas{height:26px}
.toast{position:absolute;right:10px;bottom:8px;height:21px;padding:0 12px;border:1px solid var(--line);border-radius:6px;background:#fff;font-size:11px;line-height:20px;color:var(--mute)}
.props{width:233px;flex:none;border-left:1px solid var(--line);padding:5px 14px 0;overflow:hidden;display:flex;flex-direction:column;align-items:flex-start}
.props > *{flex:none}
.props h2{height:22px;line-height:16px}
.props .label,.flabel{letter-spacing:1px;color:var(--mute)}
.props .row .label{font-size:10px}
.props .row{min-height:20px;gap:7px}
.props .row.tight{gap:6px}
.link{width:100%;margin-top:8px}
.pdm{height:21px;margin-top:6px;font-size:11px;padding:0 10px}
.props hr{width:100%;border:0;border-top:1px dashed var(--line);margin:10px 0}
.props .row + .row{margin-top:6px}
.props .row.h24 + .row:not(.bindrow){margin-top:4px}
.props .row + .row.h24{margin-top:4px}
.sbtn{height:20px;padding:0 7px}
.sbtn.grey{color:var(--mute);height:21px;font-size:11px}
.ghost{opacity:.6;height:25px;padding:0 9px;font-size:11px}.bind{height:20px}
.print{display:flex;gap:8px;padding:9px 10px 0;align-items:center}
.print b{font-size:13px;width:31px}
.print p{font-size:11px;line-height:13px;color:var(--mute);width:136px}
.build{padding:6px 10px 0;color:var(--mute);font:11px/18px var(--arial)}
.dirs{display:flex;gap:4px}
.dirs button{width:34px;height:22px;padding:0}
.dirs .on{border-color:#1b1b1b;font-weight:700}

.inspector{width:300px;flex:none;border-left:1px solid var(--line);background:var(--side);display:flex;flex-direction:column}
.inbody{flex:1;padding:15px 16px 0;color:var(--mute)}
.inspector h3{font-size:10px;font-weight:600;letter-spacing:1px;color:var(--soft);height:16px;margin-top:4px}
.cov{display:flex;align-items:center;gap:8px;line-height:15px;margin-top:6px}
.cov > span:first-child{width:58px}
.bar{flex:1;height:5px;border-radius:3px;background:#fff;display:block;overflow:hidden}
.bar i{display:block;height:5px;background:#5aa857;border-radius:3px}
.num{width:66px;text-align:right}
.cov.second{margin:8px 0 14px}
.reqs li{height:26px;display:flex;align-items:center;gap:6px;padding-left:2px}
.reqs .i{color:#d9941f}
.reqs a{font-family:var(--arial);color:var(--accent);text-decoration:none}
.more{font-size:11px;padding-left:18px;color:var(--soft)}
.inspector h3.stale{margin-top:12px}
.hint{border-top:1px solid var(--line);margin-top:14px;padding-top:11px;line-height:14px;color:var(--soft)}
.assistant{height:93px;border:0;border-top:1px solid var(--line);border-radius:0;background:none;justify-content:flex-start;padding:0 16px;gap:12px;color:var(--mute)}
.bot{width:58px;height:48px;margin-bottom:12px}
.who{flex:1;text-align:left;font-family:Inter,sans-serif}
.name{display:flex;align-items:center;gap:6px;font-size:14px;font-weight:600;color:var(--ink);line-height:18px}
.name em{font:700 10px/15px var(--arial);background:var(--tint);color:#3f3590;border-radius:6px;padding:0 6px}
.who small{font-size:11px;color:var(--soft);line-height:16px}
.status{height:28px;flex:none;border-top:1px solid var(--line);background:var(--side);display:flex;align-items:center;gap:16px;padding:0 16px;color:var(--mute)}
.live{color:#17795a}.head{margin-left:auto}
```
FILE: grid.js
```js
// Ground grid: 24 x 24 cells seen from a camera placed on the diagonal.
const HALF = 12;
const NEAR = 1.2;

function project(i, j) {
  const side = i - j;
  const depth = -(i + j);
  const w = 1 + 0.514 * depth;
  const x = 573.5 + (275.6 * side) / w;
  const y = (777.5 + 186.4 * depth) / w;
  return x.toFixed(1) + " " + y.toFixed(1);
}

let minor = "";
let major = "";
for (let n = -HALF; n <= HALF; n++) {
  const t = n / HALF;
  const end = Math.min(1, NEAR - t);
  const d = `M${project(t, -1)}L${project(t, end)}M${project(-1, t)}L${project(end, t)}`;
  if (n === 0) major += d; else minor += d;
}
document.getElementById("minor").setAttribute("d", minor);
document.getElementById("major").setAttribute("d", major);
```
